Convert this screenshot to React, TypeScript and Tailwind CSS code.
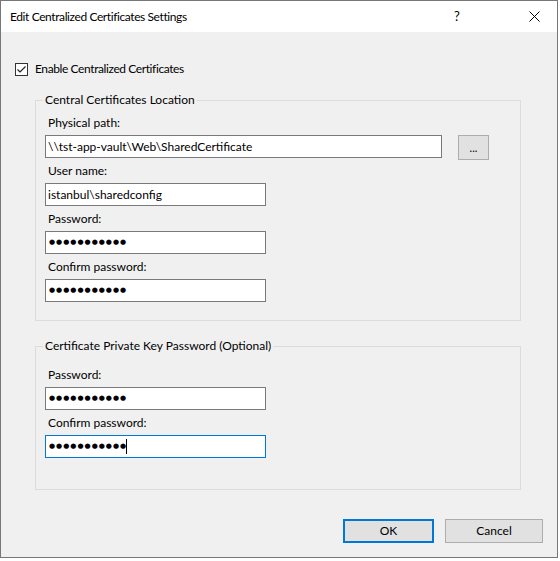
import React from 'react';

const font = "font-['Lato','Noto_Sans',sans-serif]";

const Dots: React.FC<{ caret?: boolean }> = ({ caret }) => (
  <span className="flex items-center h-full pl-[3px]">
    <span className="font-['DejaVu_Sans',sans-serif] text-[7px] tracking-[1px] leading-none text-black">
      ●●●●●●●●●●●
    </span>
    {caret && <span className="inline-block w-[1px] h-[15px] bg-black -ml-[1px]" />}
  </span>
);

const Field: React.FC<{
  label: string;
  width: string;
  first?: boolean;
  focused?: boolean;
  children: React.ReactNode;
}> = ({ label, width, first, focused, children }) => (
  <div className={first ? '' : 'mt-[5px]'}>
    <div className="h-[16px] leading-[16px] pl-[3px] mb-[4px]">{label}</div>
    <div
      className={`h-[23px] ${width} bg-white border ${focused ? 'border-[#0078d7]' : 'border-[#7a7a7a]'}`}
    >
      {children}
    </div>
  </div>
);

export default function App() {
  return (
    <div className={`w-[560px] h-[561px] bg-white text-[12px] text-black ${font}`}>
      <div className="w-[558px] h-[558px] border border-[#777777] flex flex-col">
        {/* title bar */}
        <div className="h-[31px] bg-white flex items-center pl-[9px]">
          <span className="flex-1 tracking-[-0.4px]">Edit Centralized Certificates Settings</span>
          <span className="w-[20px] text-center text-[13px] mr-[62px]">?</span>
          <svg width="11" height="11" viewBox="0 0 11 11" className="mr-[17px]">
            <path d="M0.5 0.5 L10.5 10.5 M10.5 0.5 L0.5 10.5" stroke="#000" strokeWidth="1" />
          </svg>
        </div>

        <div className="flex-1 bg-[#f0f0f0] flex flex-col">
          {/* checkbox */}
          <div className="mt-[29px] h-[16px] flex items-center pl-[14px]">
            <span className="w-[13px] h-[13px] border border-[#333333] bg-white flex items-center justify-center">
              <svg width="11" height="11" viewBox="0 0 11 11">
                <path d="M1.5 5.5 L4 8 L9.5 2.5" fill="none" stroke="#222" strokeWidth="1.2" />
              </svg>
            </span>
            <span className="ml-[7px] leading-[16px] tracking-[-0.4px]">Enable Centralized Certificates</span>
          </div>

          {/* group 1 */}
          <fieldset className="mt-[15px] ml-[34px] w-[486px] border border-[#dcdcdc] pl-[9px] pb-[18px]">
            <legend className="-ml-[2px] px-[2px] leading-[16px]">Central Certificates Location</legend>
            <div className="mt-[7px]">
              <div className="h-[16px] leading-[16px] pl-[3px] mb-[4px]">Physical path:</div>
              <div className="flex items-start h-[23px]">
                <div className="h-[23px] w-[397px] bg-white border border-[#7a7a7a] pl-[2px] leading-[21px]">
                  \\tst-app-vault\Web\SharedCertificate
                </div>
                <button className="ml-[16px] w-[31px] h-[25px] bg-[#e1e1e1] border border-[#adadad] text-[11px] leading-[20px]">
                  ...
                </button>
              </div>
            </div>
            <Field label="User name:" width="w-[221px]">
              <div className="pl-[2px] leading-[21px]">istanbul\sharedconfig</div>
            </Field>
            <Field label="Password:" width="w-[221px]">
              <Dots />
            </Field>
            <Field label="Confirm password:" width="w-[221px]">
              <Dots />
            </Field>
          </fieldset>

          {/* group 2 */}
          <fieldset className="mt-[17px] ml-[34px] w-[486px] border border-[#dcdcdc] pl-[9px] pb-[31px]">
            <legend className="-ml-[2px] px-[2px] leading-[16px]">Certificate Private Key Password (Optional)</legend>
            <div className="mt-[13px]">
              <Field label="Password:" width="w-[221px]" first>
                <Dots />
              </Field>
              <Field label="Confirm password:" width="w-[221px]" focused>
                <Dots caret />
              </Field>
            </div>
          </fieldset>

          {/* buttons */}
          <div className="mt-[29px] flex justify-end pr-[14px] gap-[11px]">
            <button className="w-[91px] h-[24px] bg-[#e1e1e1] border-2 border-[#0078d7]">OK</button>
            <button className="w-[98px] h-[24px] bg-[#e1e1e1] border border-[#adadad]">Cancel</button>
          </div>
        </div>
      </div>
    </div>
  );
}
